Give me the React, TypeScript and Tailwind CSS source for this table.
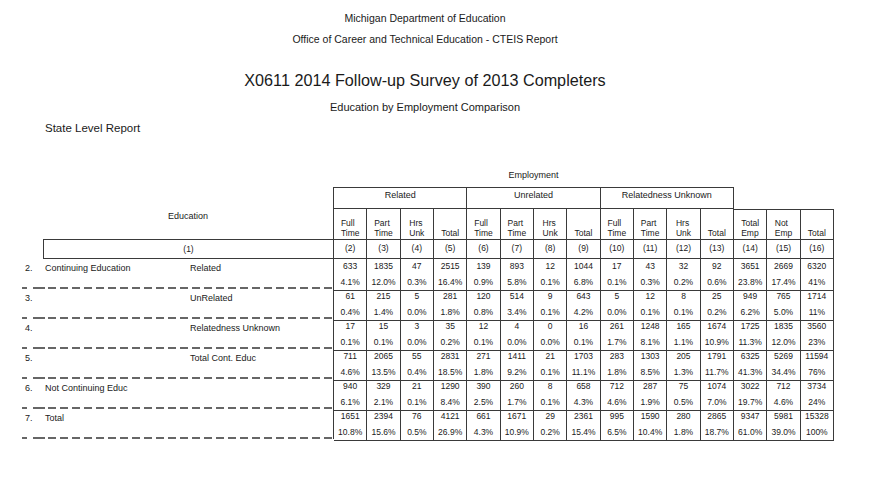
const cols: string[][] = [
  ["Full", "Time"], ["Part", "Time"], ["Hrs", "Unk"], ["Total"],
  ["Full", "Time"], ["Part", "Time"], ["Hrs", "Unk"], ["Total"],
  ["Full", "Time"], ["Part", "Time"], ["Hrs", "Unk"], ["Total"],
  ["Total", "Emp"], ["Not", "Emp"], ["Total"],
];

const rows = [
  {
    n: "2.", a: "Continuing Education", b: "Related",
    v: [["633", "4.1%"], ["1835", "12.0%"], ["47", "0.3%"], ["2515", "16.4%"], ["139", "0.9%"], ["893", "5.8%"], ["12", "0.1%"], ["1044", "6.8%"], ["17", "0.1%"], ["43", "0.3%"], ["32", "0.2%"], ["92", "0.6%"], ["3651", "23.8%"], ["2669", "17.4%"], ["6320", "41%"]],
  },
  {
    n: "3.", a: "", b: "UnRelated",
    v: [["61", "0.4%"], ["215", "1.4%"], ["5", "0.0%"], ["281", "1.8%"], ["120", "0.8%"], ["514", "3.4%"], ["9", "0.1%"], ["643", "4.2%"], ["5", "0.0%"], ["12", "0.1%"], ["8", "0.1%"], ["25", "0.2%"], ["949", "6.2%"], ["765", "5.0%"], ["1714", "11%"]],
  },
  {
    n: "4.", a: "", b: "Relatedness Unknown",
    v: [["17", "0.1%"], ["15", "0.1%"], ["3", "0.0%"], ["35", "0.2%"], ["12", "0.1%"], ["4", "0.0%"], ["0", "0.0%"], ["16", "0.1%"], ["261", "1.7%"], ["1248", "8.1%"], ["165", "1.1%"], ["1674", "10.9%"], ["1725", "11.3%"], ["1835", "12.0%"], ["3560", "23%"]],
  },
  {
    n: "5.", a: "", b: "Total Cont. Educ",
    v: [["711", "4.6%"], ["2065", "13.5%"], ["55", "0.4%"], ["2831", "18.5%"], ["271", "1.8%"], ["1411", "9.2%"], ["21", "0.1%"], ["1703", "11.1%"], ["283", "1.8%"], ["1303", "8.5%"], ["205", "1.3%"], ["1791", "11.7%"], ["6325", "41.3%"], ["5269", "34.4%"], ["11594", "76%"]],
  },
  {
    n: "6.", a: "Not Continuing Educ", b: "",
    v: [["940", "6.1%"], ["329", "2.1%"], ["21", "0.1%"], ["1290", "8.4%"], ["390", "2.5%"], ["260", "1.7%"], ["8", "0.1%"], ["658", "4.3%"], ["712", "4.6%"], ["287", "1.9%"], ["75", "0.5%"], ["1074", "7.0%"], ["3022", "19.7%"], ["712", "4.6%"], ["3734", "24%"]],
  },
  {
    n: "7.", a: "Total", b: "",
    v: [["1651", "10.8%"], ["2394", "15.6%"], ["76", "0.5%"], ["4121", "26.9%"], ["661", "4.3%"], ["1671", "10.9%"], ["29", "0.2%"], ["2361", "15.4%"], ["995", "6.5%"], ["1590", "10.4%"], ["280", "1.8%"], ["2865", "18.7%"], ["9347", "61.0%"], ["5981", "39.0%"], ["15328", "100%"]],
  },
];

function Dashes() {
  return (
    <div className="flex h-[2px] ml-[22px]">
      <div className="w-[5px] bg-[#666]" />
      <div className="w-[12px] ml-[6px] bg-[#666]" />
      <div className="flex-1 ml-[3px] bg-[repeating-linear-gradient(to_right,#666_0_8px,transparent_8px_12px)]" />
    </div>
  );
}

export default function App() {
  return (
    <div className="w-[871px] h-[486px] bg-white text-[#1a1a1a] font-['Liberation_Sans',Arial,sans-serif] overflow-hidden">
      <div className="w-[850px] flex flex-col items-center">
        <p className="mt-[11px] text-[10.5px] leading-[14px]">Michigan Department of Education</p>
        <p className="mt-[7px] text-[10.5px] leading-[14px]">Office of Career and Technical Education - CTEIS Report</p>
        <h1 className="mt-[24px] text-[16.2px] leading-[20px]">X0611 2014 Follow-up Survey of 2013 Completers</h1>
        <p className="mt-[10px] text-[11px] leading-[14px]">Education by Employment Comparison</p>
      </div>
      <p className="mt-[7px] ml-[45px] text-[11.5px] leading-[14px]">State Level Report</p>

      <div className="mt-[33px] ml-[333px] w-[401px] text-center text-[9px] leading-[14px]">Employment</div>

      <div className="mt-[5px] flex text-[9px]">
        <div className="w-[333px] flex flex-col">
          <div className="h-[52px] ml-[43px] pt-[22px] text-center leading-[14px]">Education</div>
          <div className="h-[20px] ml-[43px] border-t border-l border-b border-[#3a3a3a] text-center text-[8.5px] leading-[14px] pt-[2px]">(1)</div>
          {rows.map((r) => (
            <div key={r.n} className="h-[30px] flex flex-col">
              <div className="flex-1 flex pt-[2px] leading-[14px]">
                <span className="w-[20px] ml-[25px]">{r.n}</span>
                <span className="w-[145px]">{r.a}</span>
                <span>{r.b}</span>
              </div>
              <Dashes />
            </div>
          ))}
        </div>

        <div className="w-[501px] border-l border-[#3a3a3a]">
          <div className="grid grid-cols-15 h-[22px] leading-[14px]">
            <div className="col-span-4 border-t border-r border-b border-[#3a3a3a] text-center">Related</div>
            <div className="col-span-4 border-t border-r border-b border-[#3a3a3a] text-center">Unrelated</div>
            <div className="col-span-4 border-t border-r border-b border-[#3a3a3a] text-center">Relatedness Unknown</div>
          </div>
          <div className="grid grid-cols-15 h-[31px] text-[8.5px] leading-[10px]">
            {cols.map((c, i) => (
              <div
                key={i}
                className={`flex justify-center items-end pb-[1px] border-r border-b border-[#3a3a3a] ${i >= 12 ? "border-t" : ""}`}
              >
                <div className="text-left">
                  {c.map((t) => (
                    <div key={t}>{t}</div>
                  ))}
                </div>
              </div>
            ))}
          </div>
          <div className="grid grid-cols-15 h-[19px] text-[8.5px] leading-[14px]">
            {cols.map((_, i) => (
              <div key={i} className="pt-[1px] text-center border-r border-b border-[#3a3a3a]">
                ({i + 2})
              </div>
            ))}
          </div>
          {rows.map((r) => (
            <div key={r.n} className="grid grid-cols-15 h-[30px] text-[8.5px]">
              {r.v.map((c, i) => (
                <div key={i} className="flex flex-col items-center border-r border-b border-[#3a3a3a]">
                  <div className="leading-[15px]">{c[0]}</div>
                  <div className="leading-[16px]">{c[1]}</div>
                </div>
              ))}
            </div>
          ))}
        </div>
      </div>
    </div>
  );
}
